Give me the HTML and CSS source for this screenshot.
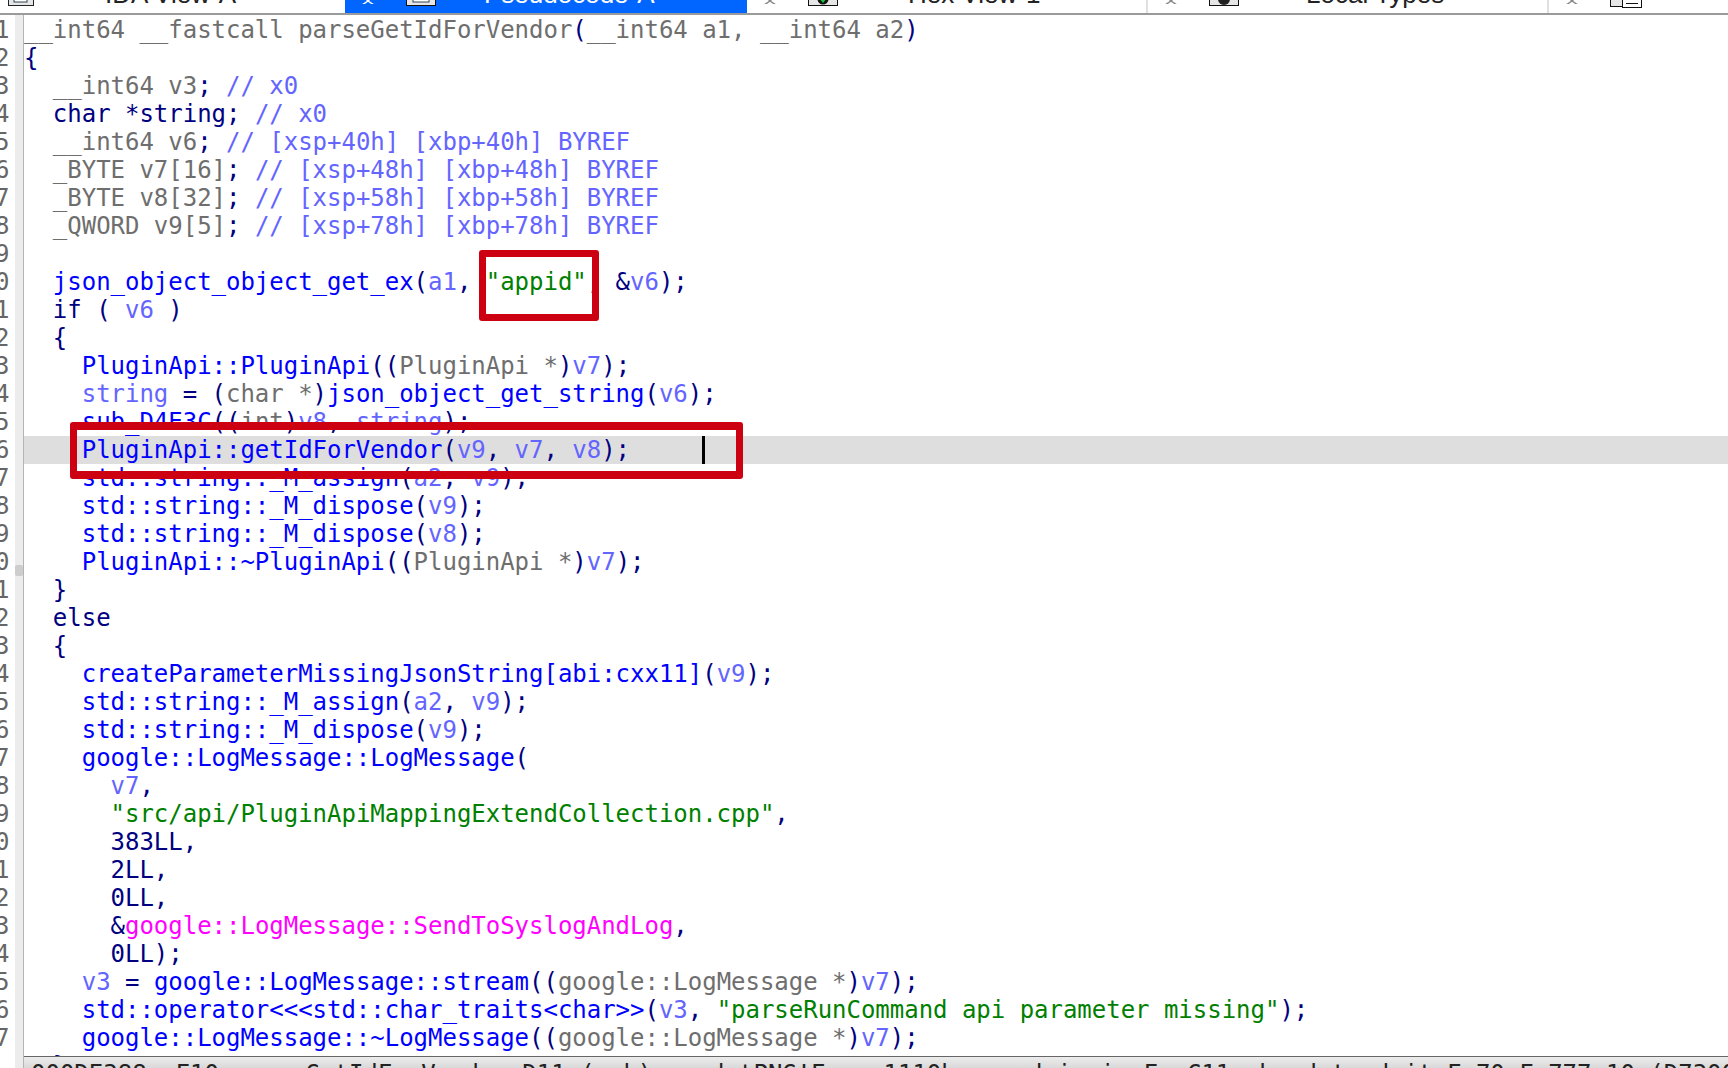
FILE: index.html
```html
<!DOCTYPE html>
<html lang="en">
<head>
<meta charset="utf-8">
<title>Pseudocode-A</title>
<link rel="stylesheet" href="styles.css">
</head>
<body>
<div class="tabbar">
  <div class="tab tab-ida">
    <svg class="icon" viewBox="0 0 26 6"><rect x="0.5" y="-6" width="25" height="11.5" fill="#e6e6e6" stroke="#222"/><rect x="6" y="-3" width="13" height="5" fill="#fff" stroke="#345"/></svg>
    <span class="label">IDA View-A</span>
  </div>
  <div class="tab tab-pseudo active">
    <svg class="close" viewBox="0 0 18 4"><path d="M5 -3L9 1L13 -3M9 1L3 5M9 1L15 5" fill="none" stroke="#fff" stroke-width="1.5"/></svg>
    <svg class="icon" viewBox="0 0 30 6"><rect x="0.5" y="-6" width="29" height="11.5" fill="#e6e6e6" stroke="#111"/><rect x="7" y="-3" width="16" height="5" fill="#fff" stroke="#345"/></svg>
    <span class="label">Pseudocode-A</span>
  </div>
  <div class="tab tab-hex">
    <svg class="close" viewBox="0 0 18 4"><path d="M5 -3L9 1L13 -3M9 1L3 5M9 1L15 5" fill="none" stroke="#888" stroke-width="1.5"/></svg>
    <svg class="icon" viewBox="0 0 30 6"><rect x="0.5" y="-6" width="29" height="11.5" fill="#e6e6e6" stroke="#111"/><circle cx="15" cy="-1" r="5.5" fill="#111"/><path d="M11 -2H19L15 3Z" fill="#19c43a"/></svg>
    <span class="label">Hex View-1</span>
  </div>
  <div class="tab tab-local">
    <svg class="close" viewBox="0 0 18 4"><path d="M5 -3L9 1L13 -3M9 1L3 5M9 1L15 5" fill="none" stroke="#888" stroke-width="1.5"/></svg>
    <svg class="icon" viewBox="0 0 30 6"><rect x="0.5" y="-6" width="29" height="11.5" fill="#e6e6e6" stroke="#111"/><circle cx="15" cy="-1" r="6" fill="#222"/><circle cx="15" cy="-3" r="2.5" fill="#ddd"/></svg>
    <span class="label">Local Types</span>
  </div>
  <div class="tab tab-last">
    <svg class="close" viewBox="0 0 18 4"><path d="M5 -3L9 1L13 -3M9 1L3 5M9 1L15 5" fill="none" stroke="#888" stroke-width="1.5"/></svg>
    <svg class="icon icon-docs" viewBox="0 0 32 8"><rect x="0.5" y="-6" width="19" height="12.5" fill="#e6e6e6" stroke="#111"/><rect x="12.5" y="-4" width="19" height="11.5" fill="#fff" stroke="#111"/><path d="M16 3.5H28" stroke="#111"/></svg>
  </div>
</div>
<div class="main">
  <div class="nums">
    <div>1</div><div>2</div><div>3</div><div>4</div><div>5</div><div>6</div><div>7</div><div>8</div><div>9</div><div>0</div>
    <div>1</div><div>2</div><div>3</div><div>4</div><div>5</div><div>6</div><div>7</div><div>8</div><div>9</div><div>0</div>
    <div>1</div><div>2</div><div>3</div><div>4</div><div>5</div><div>6</div><div>7</div><div>8</div><div>9</div><div>0</div>
    <div>1</div><div>2</div><div>3</div><div>4</div><div>5</div><div>6</div><div>7</div>
  </div>
  <div class="rail"><div class="thumb"></div></div>
  <div class="right">
    <div class="code">
<div class="row"><span class="t">__int64 __fastcall parseGetIdForVendor</span>(<span class="t">__int64 a1, __int64 a2</span>)</div>
<div class="row">{</div>
<div class="row">  <span class="t">__int64 v3</span>; <span class="l">// x0</span></div>
<div class="row">  char *string; <span class="l">// x0</span></div>
<div class="row">  <span class="t">__int64 v6</span>; <span class="l">// [xsp+40h] [xbp+40h] BYREF</span></div>
<div class="row">  <span class="t">_BYTE v7[16]</span>; <span class="l">// [xsp+48h] [xbp+48h] BYREF</span></div>
<div class="row">  <span class="t">_BYTE v8[32]</span>; <span class="l">// [xsp+58h] [xbp+58h] BYREF</span></div>
<div class="row">  <span class="t">_QWORD v9[5]</span>; <span class="l">// [xsp+78h] [xbp+78h] BYREF</span></div>
<div class="row"> </div>
<div class="row">  <span class="f">json_object_object_get_ex</span>(<span class="l">a1</span>, <span class="s">"appid"</span>, &amp;<span class="l">v6</span>);</div>
<div class="row">  if ( <span class="l">v6</span> )</div>
<div class="row">  {</div>
<div class="row">    <span class="f">PluginApi::PluginApi</span>((<span class="t">PluginApi *</span>)<span class="l">v7</span>);</div>
<div class="row">    <span class="l">string</span> = (<span class="t">char *</span>)<span class="f">json_object_get_string</span>(<span class="l">v6</span>);</div>
<div class="row">    <span class="f">sub_D4E3C</span>((<span class="t">int</span>)<span class="l">v8</span>, <span class="l">string</span>);</div>
<div class="row current">    <span class="f">PluginApi::getIdForVendor</span>(<span class="l">v9</span>, <span class="l">v7</span>, <span class="l">v8</span>);<i class="caret"></i></div>
<div class="row">    <span class="f">std::string::_M_assign</span>(<span class="l">a2</span>, <span class="l">v9</span>);</div>
<div class="row">    <span class="f">std::string::_M_dispose</span>(<span class="l">v9</span>);</div>
<div class="row">    <span class="f">std::string::_M_dispose</span>(<span class="l">v8</span>);</div>
<div class="row">    <span class="f">PluginApi::~PluginApi</span>((<span class="t">PluginApi *</span>)<span class="l">v7</span>);</div>
<div class="row">  }</div>
<div class="row">  else</div>
<div class="row">  {</div>
<div class="row">    <span class="f">createParameterMissingJsonString[abi:cxx11]</span>(<span class="l">v9</span>);</div>
<div class="row">    <span class="f">std::string::_M_assign</span>(<span class="l">a2</span>, <span class="l">v9</span>);</div>
<div class="row">    <span class="f">std::string::_M_dispose</span>(<span class="l">v9</span>);</div>
<div class="row">    <span class="f">google::LogMessage::LogMessage</span>(</div>
<div class="row">      <span class="l">v7</span>,</div>
<div class="row">      <span class="s">"src/api/PluginApiMappingExtendCollection.cpp"</span>,</div>
<div class="row">      383LL,</div>
<div class="row">      2LL,</div>
<div class="row">      0LL,</div>
<div class="row">      &amp;<span class="m">google::LogMessage::SendToSyslogAndLog</span>,</div>
<div class="row">      0LL);</div>
<div class="row">    <span class="l">v3</span> = <span class="f">google::LogMessage::stream</span>((<span class="t">google::LogMessage *</span>)<span class="l">v7</span>);</div>
<div class="row">    <span class="f">std::operator&lt;&lt;&lt;std::char_traits&lt;char&gt;&gt;</span>(<span class="l">v3</span>, <span class="s">"parseRunCommand api parameter missing"</span>);</div>
<div class="row">    <span class="f">google::LogMessage::~LogMessage</span>((<span class="t">google::LogMessage *</span>)<span class="l">v7</span>);</div>
<div class="row">  }</div>
      <div class="mark mark-appid"></div>
      <div class="mark mark-call"></div>
    </div>
    <div class="status">000DE388  F10 parseGetIdForVendor:D11 (sub) word tPNG!E    1110h  word in i  F  C11  b  d t  d it F 70 F 777 10 (D7300</div>
  </div>
</div>
</body>
</html>
```
FILE: styles.css
```css
* { box-sizing: border-box; }
html, body { margin: 0; height: 100%; overflow: hidden; background: #fff; }
body { display: flex; flex-direction: column; height: 1068px; }

.tabbar {
  display: flex;
  flex: none;
  height: 15px;
  overflow: hidden;
  border-bottom: 2px solid #9a9a9a;
  font-family: "Liberation Sans", Arial, sans-serif;
  font-size: 26px;
  color: #222;
}
.tab {
  position: relative;
  flex: none;
  display: flex;
  align-items: flex-start;
  height: 13px;
  border-right: 2px solid #e0e0e0;
}
.tab.active { background: #0066ff; color: #fff; border-right: 0; }
.label { line-height: 30px; margin-top: -21px; white-space: nowrap; }
.icon { display: block; flex: none; width: 30px; height: 6px; margin-left: 29px; }
.close { display: block; flex: none; width: 18px; height: 4px; margin-left: 14px; }

.tab-ida { width: 345px; padding-left: 8px; border-right: 0; }
.tab-ida .icon { width: 26px; margin-left: 0; }
.tab-ida .label { margin-left: 71px; }
.tab-pseudo { width: 402px; }
.tab-pseudo .label { margin-left: 48px; }
.tab-hex { width: 401px; }
.tab-hex .label { margin-left: 70px; }
.tab-local { width: 401px; }
.tab-local .label { margin-left: 67px; }
.tab-last { width: 179px; border-right: 0; }
.icon-docs { width: 32px; height: 8px; margin-left: 29px; }

.main { flex: 1; display: flex; min-height: 0; }
.nums {
  flex: none;
  width: 15px;
  padding-top: 1px;
  overflow: hidden;
  font: 24px/28px "DejaVu Sans Mono", monospace;
  color: #666;
}
.nums div { margin-left: -5px; }
.rail {
  position: relative;
  flex: none;
  width: 9px;
  background: #ececec;
  border-right: 1px solid #b4b4b4;
}
.thumb {
  position: absolute;
  top: 550px;
  left: 0;
  width: 8px;
  height: 11px;
  border-radius: 2px;
  background: #cdcdcd;
}
.right { flex: 1; min-width: 0; display: flex; flex-direction: column; }
.code {
  position: relative;
  flex: 1;
  min-height: 0;
  padding-top: 1px;
  overflow: hidden;
  font-family: "DejaVu Sans Mono", monospace;
  font-size: 24px;
  line-height: 28px;
  letter-spacing: -0.02px;
  color: #000080;
}
.row { height: 28px; white-space: pre; }
.row.current { position: relative; background: #dedede; }
.t { color: #6e6e6e; }
.l { color: #6464ff; }
.f { color: #0000ff; }
.s { color: #008000; }
.m { color: #ff00ff; }
.caret {
  position: absolute;
  left: 678px;
  top: 0;
  width: 3px;
  height: 28px;
  background: #000;
}
.mark {
  position: absolute;
  border: 7px solid #cc0011;
  border-radius: 3px;
}
.mark-appid { left: 455px; top: 235px; width: 120px; height: 71px; }
.mark-call { left: 46px; top: 407px; width: 673px; height: 57px; border-width: 8px 7px; }

.status {
  flex: none;
  height: 12px;
  padding: 3px 0 0 7px;
  overflow: hidden;
  border-top: 1px solid #666;
  background: linear-gradient(#ececec, #d9d9d9);
  font-family: "DejaVu Sans Mono", monospace;
  font-size: 24px;
  line-height: 28px;
  color: #222;
  white-space: pre;
}
```
